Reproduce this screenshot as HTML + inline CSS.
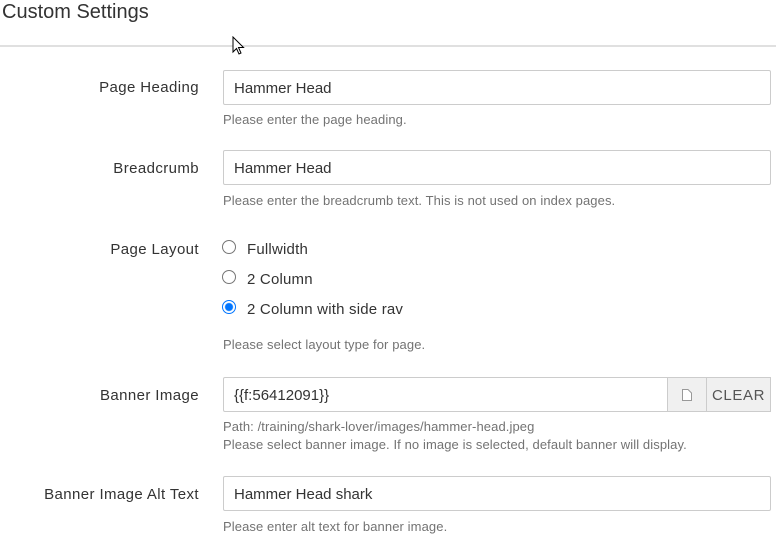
<!DOCTYPE html>
<html><head><style>
body{margin:0;width:776px;height:534px;overflow:hidden;background:#fff;font-family:"Liberation Sans",Arial,sans-serif;color:#333;position:relative}
.a{position:absolute}
h1{position:absolute;left:2px;top:1px;margin:0;font-size:20px;font-weight:normal;color:#333}
.hr{left:0;top:45px;width:776px;height:2px;background:#e0e0e0}
.lab{right:577px;font-size:15px;text-align:right;white-space:nowrap;line-height:18px;letter-spacing:0.4px}
.inp{left:223px;height:33px;border:1px solid #ccc;border-radius:2px;box-sizing:content-box;font-size:15px;line-height:35px;padding-left:10px;width:536px}
.help{left:223px;font-size:13px;color:#737373;line-height:17px;white-space:nowrap;letter-spacing:0.1px}
.rad{left:222px;width:12px;height:12px;border:1px solid #767676;border-radius:50%}
.rt{left:247px;font-size:15px;line-height:18px;letter-spacing:0.2px}
</style></head><body>
<h1>Custom Settings</h1>
<div class="a hr"></div>
<svg class="a" style="left:232px;top:36px" width="14" height="20" viewBox="0 0 14 20"><path d="M1 1 L1 16 L4.5 12.5 L7 18 L9 17 L6.5 11.5 L11.5 11.5 Z" fill="#fff" stroke="#000" stroke-width="1"/></svg>

<div class="a lab" style="top:79px">Page Heading</div>
<div class="a inp" style="top:70px">Hammer Head</div>
<div class="a help" style="top:111px">Please enter the page heading.</div>

<div class="a lab" style="top:160px">Breadcrumb</div>
<div class="a inp" style="top:150px">Hammer Head</div>
<div class="a help" style="top:192px">Please enter the breadcrumb text. This is not used on index pages.</div>

<div class="a lab" style="top:241px">Page Layout</div>
<div class="a rad" style="top:240px"></div><div class="a rt" style="top:241px">Fullwidth</div>
<div class="a rad" style="top:270px"></div><div class="a rt" style="top:271px">2 Column</div>
<div class="a rad" style="top:300px;border-color:#0075ff;background:radial-gradient(circle,#0075ff 3.5px,#fff 4.5px)"></div><div class="a rt" style="top:301px">2 Column with side rav</div>
<div class="a help" style="top:336px">Please select layout type for page.</div>

<div class="a lab" style="top:387px">Banner Image</div>
<div class="a inp" style="top:377px;width:433px;border-radius:2px 0 0 2px">{{f:56412091}}</div>
<div class="a" style="left:667px;top:377px;width:38px;height:33px;border:1px solid #ccc;background:#f0f0f0"><svg style="position:absolute;left:14px;top:11px" width="10" height="12" viewBox="0 0 10 12"><path d="M0.5 0.5H6L9.5 4V11.5H0.5Z" fill="#fff" stroke="#999"/></svg></div>
<div class="a" style="left:706px;top:377px;width:63px;height:33px;border:1px solid #ccc;background:#f0f0f0;font-size:15px;line-height:35px;text-align:center;color:#555;letter-spacing:0.6px">CLEAR</div>
<div class="a help" style="top:418px">Path: /training/shark-lover/images/hammer-head.jpeg</div>
<div class="a help" style="top:436px">Please select banner image. If no image is selected, default banner will display.</div>

<div class="a lab" style="top:486px">Banner Image Alt Text</div>
<div class="a inp" style="top:476px">Hammer Head shark</div>
<div class="a help" style="top:518px">Please enter alt text for banner image.</div>
</body></html>
